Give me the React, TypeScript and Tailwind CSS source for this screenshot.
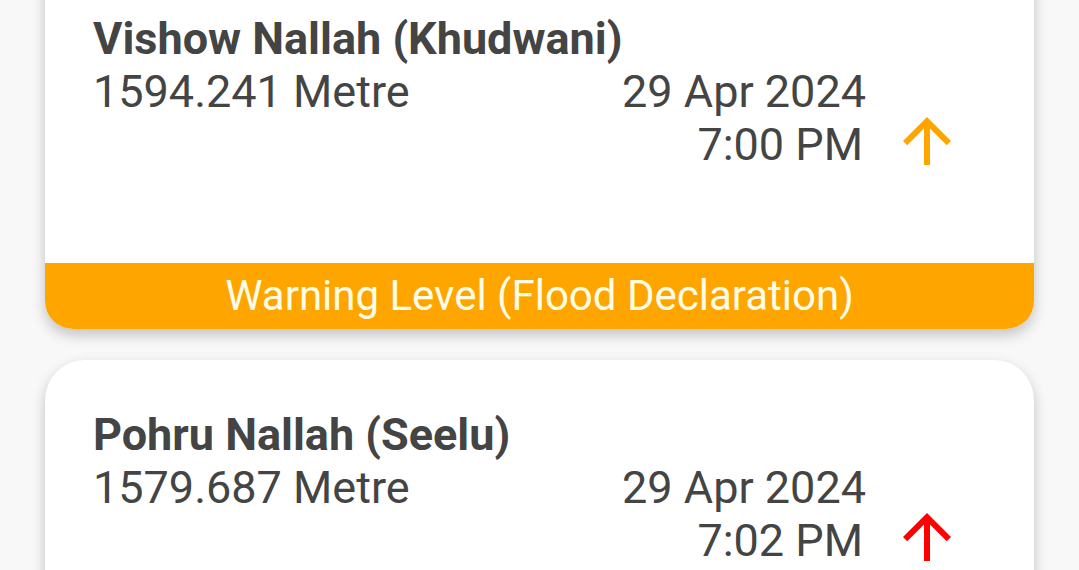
import React from 'react';

type Station = {
  name: string;
  level: string;
  date: string;
  time: string;
  arrowColor: string;
  banner?: string;
};

const stations: Station[] = [
  {
    name: 'Vishow Nallah (Khudwani)',
    level: '1594.241 Metre',
    date: '29 Apr 2024',
    time: '7:00 PM',
    arrowColor: '#FFA500',
    banner: 'Warning Level (Flood Declaration)',
  },
  {
    name: 'Pohru Nallah (Seelu)',
    level: '1579.687 Metre',
    date: '29 Apr 2024',
    time: '7:02 PM',
    arrowColor: '#FF0000',
  },
];

// material "arrow_upward"
const ArrowUp = ({ color }: { color: string }) => (
  <svg width="72" height="72" viewBox="0 0 24 24" fill={color}>
    <path d="M4 12l1.41 1.41L11 7.83V20h2V7.83l5.58 5.59L20 12l-8-8-8 8z" />
  </svg>
);

const StationCard = ({ s, first }: { s: Station; first?: boolean }) => (
  <div
    className={`bg-white rounded-[28px] overflow-hidden shadow-[0_6px_14px_rgba(0,0,0,0.22)] ${
      first ? '-mt-[40px] pt-[52px]' : 'rounded-t-[40px] pt-[48px]'
    }`}
  >
    <div className="pl-[48px] pr-[71px] text-[#444444]">
      <div className="text-[45px] font-bold leading-[53px]">{s.name}</div>
      <div className="flex">
        <div className="flex-1 text-[45px] leading-[53px]">{s.level}</div>
        <div className="text-right text-[45px] leading-[53px]">
          <div>{s.date}</div>
          <div className="pr-[3px]">{s.time}</div>
        </div>
        <div className="ml-[25px] pt-[40px]">
          <ArrowUp color={s.arrowColor} />
        </div>
      </div>
    </div>
    {s.banner ? (
      <div className="mt-[86px] h-[66px] bg-[#FFA500] flex items-center justify-center text-[42px] text-[#FFFDE7] leading-none">
        {s.banner}
      </div>
    ) : (
      <div className="h-[120px]" />
    )}
  </div>
);

const App: React.FC = () => {
  return (
    <main
      className="h-[570px] overflow-hidden bg-[#f8f8f8] px-[45px]"
      style={{ fontFamily: 'Roboto, "Liberation Sans", sans-serif' }}
    >
      <div className="flex flex-col gap-[31px]">
        {stations.map((s, i) => (
          <StationCard key={s.name} s={s} first={i === 0} />
        ))}
      </div>
    </main>
  );
};

export default App;
